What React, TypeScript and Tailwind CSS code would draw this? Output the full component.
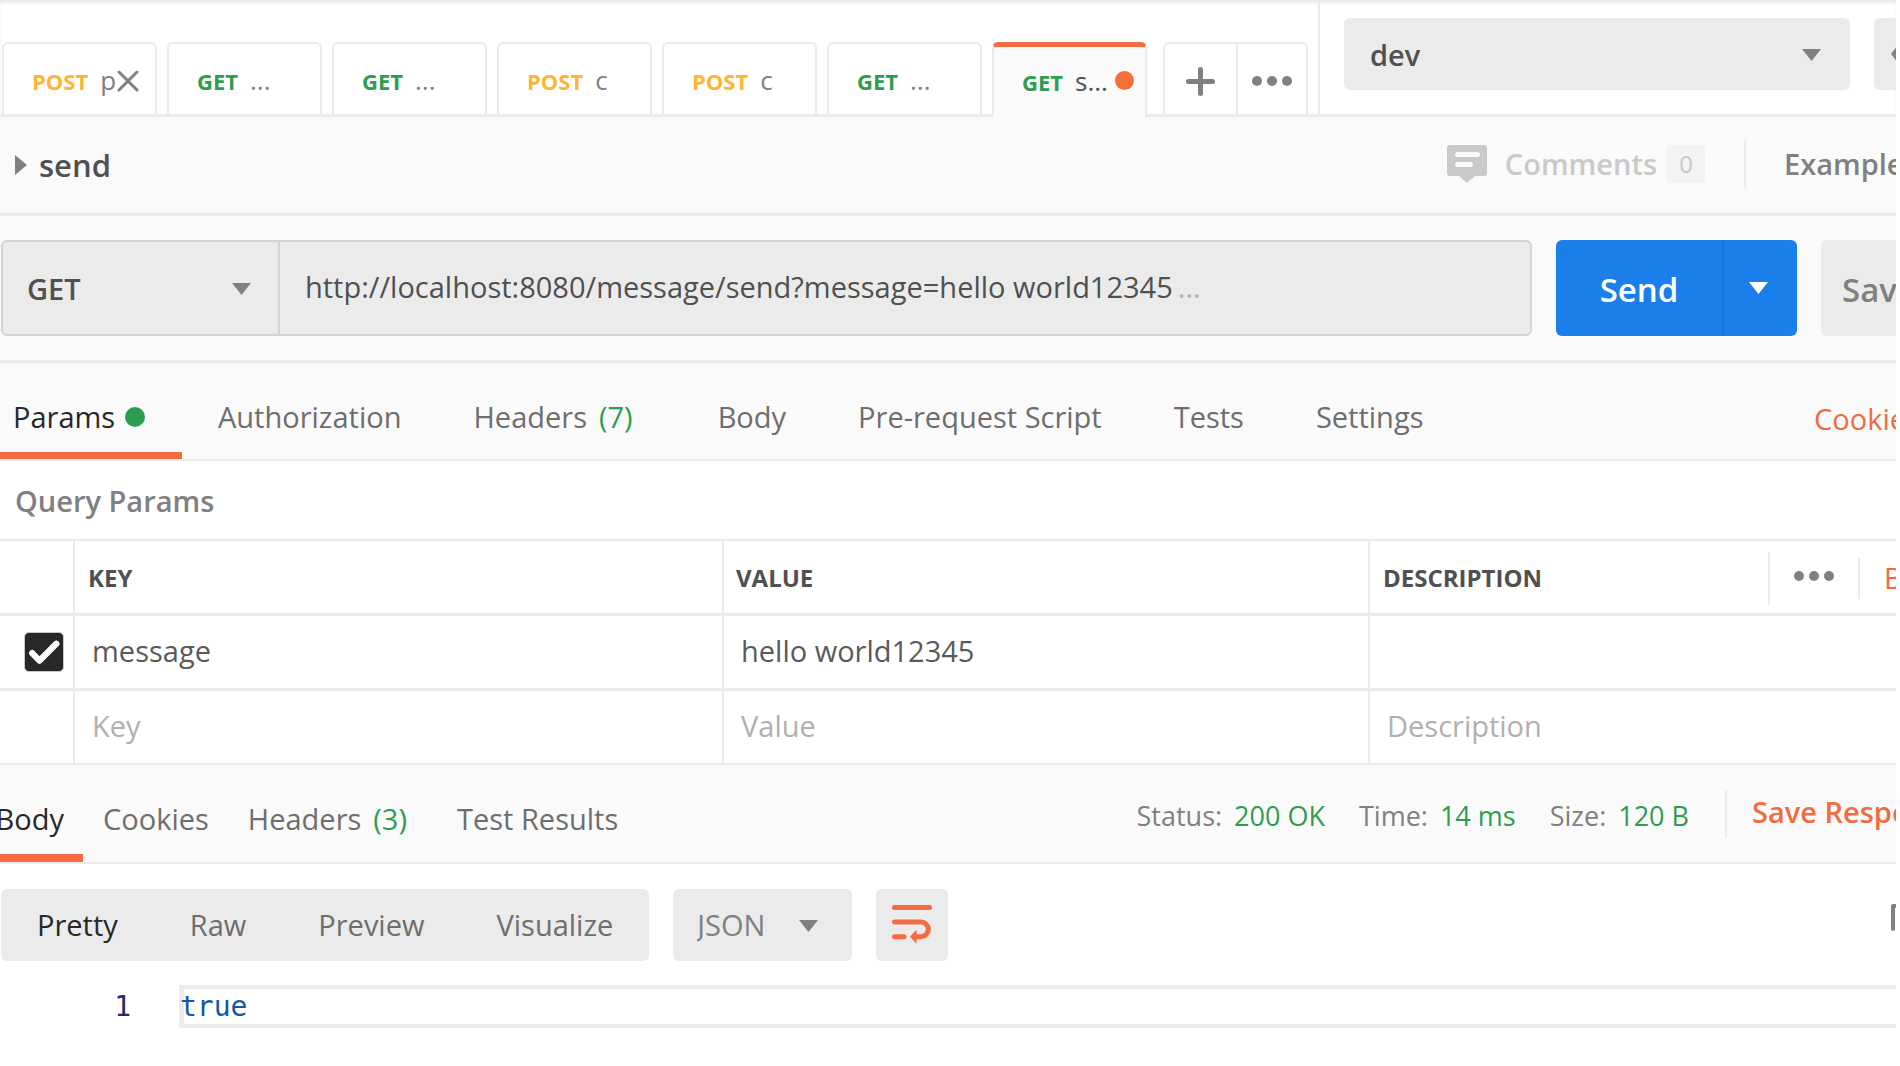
import React, { useState } from 'react';
import clsx from 'clsx';

interface RequestTab {
  id: number;
  method: 'GET' | 'POST';
  name: string;
  closing?: boolean;
}

const requestTabs: RequestTab[] = [
  { id: 1, method: 'POST', name: 'p', closing: true },
  { id: 2, method: 'GET', name: '...' },
  { id: 3, method: 'GET', name: '...' },
  { id: 4, method: 'POST', name: 'c' },
  { id: 5, method: 'POST', name: 'c' },
  { id: 6, method: 'GET', name: '...' },
  { id: 7, method: 'GET', name: 's...' },
];

const Caret = ({ className }: { className?: string }) => (
  <svg viewBox="0 0 19 12" className={clsx('h-3 w-[19px]', className)} fill="currentColor" aria-hidden="true">
    <path d="M0 0h19L9.5 12z" />
  </svg>
);

const Dots = () => (
  <svg viewBox="0 0 40 10" className="h-[10px] w-10" fill="currentColor" aria-hidden="true">
    <circle cx="5" cy="5" r="5" />
    <circle cx="20" cy="5" r="5" />
    <circle cx="35" cy="5" r="5" />
  </svg>
);

const CommentIcon = () => (
  <svg viewBox="0 0 40 38" className="h-[38px] w-10" aria-hidden="true">
    <path d="M3 0h34a3 3 0 0 1 3 3v25a3 3 0 0 1-3 3h-9l-8 7-8-7H3a3 3 0 0 1-3-3V3a3 3 0 0 1 3-3z" fill="#c9c9c9" />
    <path d="M10.500 9.500h20M10.500 19.500h13" stroke="#fafafa" strokeWidth="5" strokeLinecap="round" />
  </svg>
);

const WrapIcon = () => (
  <svg viewBox="0 0 40 39" className="h-[39px] w-10" fill="none" stroke="#f26b41" strokeWidth="5" strokeLinecap="round" aria-hidden="true">
    <path d="M2.500 2.500h35M2.500 17H29a7.300 7.300 0 0 1 0 14.700h-5M2.500 31.700h9.500" />
    <path d="M18 31.700l6.500-7v14z" fill="#f26b41" stroke="none" />
  </svg>
);

const EyeIcon = () => (
  <svg viewBox="0 0 40 26" className="h-[26px] w-10" aria-hidden="true">
    <path d="M0 13C7 3 13 0 20 0s13 3 20 13c-7 10-13 13-20 13S7 23 0 13z" fill="#808080" />
    <circle cx="20" cy="13" r="8" fill="#ebebeb" />
    <circle cx="20" cy="13" r="4" fill="#808080" />
  </svg>
);

const CopyIcon = () => (
  <svg viewBox="0 0 34 42" className="h-[42px] w-[34px]" fill="none" stroke="#808080" strokeWidth="4" strokeLinecap="round" strokeLinejoin="round" aria-hidden="true">
    <path d="M2 25V2h20" />
    <path d="M12 12h20v26H12z" />
  </svg>
);

const TopBar = () => {
  const [active, setActive] = useState(7);

  return (
    <div className="flex h-[117px] border-b-[3px] border-[#ebebeb] bg-white shadow-[inset_0_3px_2px_#ececec]">
      <div className="flex flex-1 items-end pl-0.5">
        <div role="tablist" aria-label="Requests" className="flex items-end gap-[10px]">
          {requestTabs.map((tab) => (
            <button
              key={tab.id}
              role="tab"
              aria-selected={active === tab.id}
              onClick={() => setActive(tab.id)}
              className={clsx(
                'relative flex w-[155px] items-center overflow-hidden rounded-t-md border-x-2 border-[#ebebeb] pl-7',
                active === tab.id
                  ? '-mb-[3px] h-[75px] border-t-[5px] border-t-[#f26b41] bg-[#fafafa] pb-0.5 text-[#505050]'
                  : 'h-[72px] border-t-2 bg-white pt-0.5 text-[#808080]'
              )}
            >
              <span className="flex items-baseline gap-3 text-[26px]">
                <span
                  className={clsx(
                    'text-[22px] font-bold',
                    tab.method === 'GET' ? 'text-[#2d9d4f]' : 'text-[#ffb532]'
                  )}
                >
                  {tab.method}
                </span>
                {tab.name}
              </span>
              {tab.closing && (
                <svg viewBox="0 0 22 22" className="absolute right-4 top-[26px] size-[22px]" stroke="#808080" strokeWidth="3" strokeLinecap="round" aria-hidden="true">
                  <path d="M2 2l18 18M20 2L2 20" />
                </svg>
              )}
              {active === tab.id && (
                <span className="absolute right-[11px] top-6 size-[19px] rounded-full bg-[#f37036]" />
              )}
            </button>
          ))}
        </div>
        <div className="ml-4 flex h-[72px] w-[145px] rounded-t-md border-x-2 border-t-2 border-[#ebebeb] text-[#808080]">
          <button aria-label="New tab" className="flex flex-1 items-center justify-center pt-1">
            <svg viewBox="0 0 29 29" className="size-[29px]" stroke="currentColor" strokeWidth="5" strokeLinecap="round" aria-hidden="true">
              <path d="M14.500 2.500v24M2.500 14.500h24" />
            </svg>
          </button>
          <button aria-label="Tab options" className="flex w-[70px] items-center justify-center border-l-2 border-[#ebebeb] pt-1">
            <Dots />
          </button>
        </div>
      </div>
      <div className="flex shrink-0 items-start border-l-2 border-[#ebebeb] pl-6 pt-[18px]">
        <div className="relative">
          <select
            aria-label="Environment"
            className="h-[72px] w-[506px] appearance-none rounded-md bg-[#ebebeb] pl-[26px] pt-0.5 text-[29px] font-semibold text-[#505050]"
          >
            <option>dev</option>
          </select>
          <Caret className="pointer-events-none absolute right-[29px] top-[31px] text-[#808080]" />
        </div>
        <div className="ml-6 w-[22px] overflow-hidden">
          <button aria-label="Environment quick look" className="flex h-[72px] w-[74px] items-center rounded-md bg-[#ebebeb] pl-[17px]">
            <EyeIcon />
          </button>
        </div>
      </div>
    </div>
  );
};

const RequestHeader = () => (
  <div className="flex h-[99px] items-center border-b-[3px] border-[#ebebeb] pl-[15px]">
    <button className="flex items-center gap-3 text-[31px] font-semibold text-[#505050]">
      <svg viewBox="0 0 12 20" className="h-5 w-3" fill="#808080" aria-hidden="true">
        <path d="M0 0l12 10L0 20z" />
      </svg>
      send
    </button>
    <div className="ml-auto flex items-center pb-0.5 text-[29px] font-semibold">
      <button className="flex items-center text-[#c9c9c9]">
        <CommentIcon />
        <span className="ml-[18px]">Comments</span>
        <span className="ml-[10px] flex h-[38px] w-[38px] items-center justify-center rounded bg-[#f3f3f3] text-2xl font-normal">0</span>
      </button>
      <span className="ml-[39px] h-12 w-0.5 bg-[#ebebeb]" />
      <button className="ml-[38px] w-28 overflow-hidden whitespace-nowrap text-left text-[#808080]">Examples</button>
    </div>
  </div>
);

const UrlBar = () => (
  <div className="flex h-[147px] items-center border-b-[3px] border-[#ebebeb] pl-px">
    <div className="flex h-24 flex-1 rounded-md border-2 border-[#d3d3d3] bg-[#ebebeb]">
      <div className="relative border-r-2 border-[#d3d3d3]">
        <select
          aria-label="Method"
          className="h-full w-[275px] appearance-none pl-6 pt-0.5 text-[29px] font-semibold text-[#505050]"
        >
          <option>GET</option>
        </select>
        <Caret className="pointer-events-none absolute right-[27px] top-[41px] text-[#808080]" />
      </div>
      <div className="flex min-w-0 flex-1 items-center gap-[5px] pb-0.5 pl-[25px] text-[29px]">
        <input
          aria-label="Request URL"
          defaultValue="http://localhost:8080/message/send?message=hello world12345"
          className="field-sizing-content text-[#505050] outline-none"
        />
        <span className="text-[#b0b0b0]">...</span>
      </div>
    </div>
    <div className="ml-6 flex h-24 overflow-hidden rounded-md bg-[#1a7feb] text-white">
      <button className="w-[166px] pt-1 text-[33px] font-semibold">Send</button>
      <button aria-label="Send options" className="flex w-[75px] items-center justify-center border-l-2 border-[#1672dc] pr-1">
        <Caret />
      </button>
    </div>
    <div className="ml-6 w-[75px] overflow-hidden">
      <button className="h-24 w-[125px] rounded-md bg-[#ebebeb] pl-[21px] pt-1 text-left text-[33px] font-semibold text-[#808080]">Save</button>
    </div>
  </div>
);

const requestSections = ['Authorization', 'Headers', 'Body', 'Pre-request Script', 'Tests', 'Settings'];

const RequestSections = () => (
  <div className="flex h-[98px] border-b-2 border-[#ebebeb] text-[29px] text-[#6e6e6e]">
    <div role="tablist" aria-label="Request sections" className="flex">
      <button
        role="tab"
        aria-selected="true"
        className="flex w-[182px] items-center gap-[10px] border-b-[7px] border-[#f26b41] pl-[13px] pt-[18px] text-[#282828]"
      >
        Params
        <span className="size-5 rounded-full bg-[#2d9d4f]" />
      </button>
      {requestSections.map((name) => (
        <button
          key={name}
          role="tab"
          aria-selected="false"
          className={clsx('whitespace-nowrap pl-9 pt-3', name === 'Headers' ? 'pr-[49px]' : 'pr-9')}
        >
          {name}
          {name === 'Headers' && <span className="ml-3 text-[#2d9d4f]">(7)</span>}
        </button>
      ))}
    </div>
    <button className="ml-auto w-[82px] overflow-hidden whitespace-nowrap pt-4 text-left text-[#f26b41]">Cookies</button>
  </div>
);

const thClass = 'h-[75px] border-b-[3px] border-[#ebebeb] pb-0 pt-0.5 text-left text-2xl font-bold text-[#505050]';
const tdClass = 'h-[75px] border-b-[3px] border-[#ebebeb] p-0';
const lastRowClass = 'h-[74px] border-b-2 border-[#ebebeb] p-0';
const cellInput = 'block w-full pb-0.5 pl-[17px] text-[29px] text-[#5a5a5a] outline-none placeholder:text-[#b0b0b0]';

const QueryParams = () => (
  <section className="bg-white">
    <h2 className="flex h-20 items-center border-b-2 border-[#ebebeb] pl-[15px] pt-0.5 text-[29px] font-semibold text-[#808080]">
      Query Params
    </h2>
    <table className="w-full table-fixed border-separate border-spacing-0">
      <colgroup>
        <col className="w-[75px]" />
        <col className="w-[649px]" />
        <col />
        <col className="w-[526px]" />
      </colgroup>
      <thead>
        <tr>
          <th aria-label="Enabled" className={clsx(thClass, 'border-r-2')} />
          <th className={clsx(thClass, 'border-r-2 pl-[13px]')}>KEY</th>
          <th className={clsx(thClass, 'border-r-2 pl-3')}>VALUE</th>
          <th className={clsx(thClass, 'pl-[13px]')}>
            <div className="flex items-center">
              DESCRIPTION
              <span className="ml-auto h-[53px] w-0.5 bg-[#ebebeb]" />
              <button aria-label="Column options" className="ml-6 pb-1 text-[#808080]"><Dots /></button>
              <span className="ml-6 h-[41px] w-0.5 bg-[#ebebeb]" />
              <button className="ml-6 w-3 overflow-hidden whitespace-nowrap text-left text-[29px] font-normal text-[#f26b41]">Bulk Edit</button>
            </div>
          </th>
        </tr>
      </thead>
      <tbody>
        <tr>
          <td className={clsx(tdClass, 'border-r-2')}>
            <label className="relative ml-6 block size-10">
              <input
                type="checkbox"
                aria-label="Enable message"
                defaultChecked
                className="peer block size-full appearance-none rounded-[5px] border border-[#c8c8c8] checked:bg-[#282828]"
              />
              <svg viewBox="0 0 39 39" className="pointer-events-none absolute inset-0 hidden size-full peer-checked:block" fill="none" stroke="#fff" strokeWidth="6" strokeLinecap="round" strokeLinejoin="round" aria-hidden="true">
                <path d="M8 20.500l7 7.500L31.500 11.500" />
              </svg>
            </label>
          </td>
          <td className={clsx(tdClass, 'border-r-2')}>
            <input aria-label="Key" defaultValue="message" className={cellInput} />
          </td>
          <td className={clsx(tdClass, 'border-r-2')}>
            <input aria-label="Value" defaultValue="hello world12345" className={cellInput} />
          </td>
          <td className={tdClass}>
            <input aria-label="Description" className={cellInput} />
          </td>
        </tr>
        <tr>
          <td className={clsx(lastRowClass, 'border-r-2')} />
          <td className={clsx(lastRowClass, 'border-r-2')}>
            <input aria-label="New key" placeholder="Key" className={cellInput} />
          </td>
          <td className={clsx(lastRowClass, 'border-r-2')}>
            <input aria-label="New value" placeholder="Value" className={cellInput} />
          </td>
          <td className={lastRowClass}>
            <input aria-label="New description" placeholder="Description" className={cellInput} />
          </td>
        </tr>
      </tbody>
    </table>
  </section>
);

const responseStats = [
  { label: 'Status:', value: '200 OK' },
  { label: 'Time:', value: '14 ms' },
  { label: 'Size:', value: '120 B' },
];

const ResponseHeader = () => (
  <div className="flex h-[99px] border-b-2 border-[#ebebeb] text-[29px] text-[#6e6e6e]">
    <div role="tablist" aria-label="Response sections" className="flex">
      <button role="tab" aria-selected="true" className="flex w-[83px] items-center justify-end border-b-8 border-[#f26b41] pr-[19px] pt-[18px] text-[#282828]">
        Body
      </button>
      <button role="tab" aria-selected="false" className="px-5 pt-[10px]">Cookies</button>
      <button role="tab" aria-selected="false" className="pl-[19px] pr-[30px] pt-[10px]">
        Headers<span className="ml-3 text-[#2d9d4f]">(3)</span>
      </button>
      <button role="tab" aria-selected="false" className="px-5 pt-[10px]">Test Results</button>
    </div>
    <div className="ml-auto flex items-center">
      <dl className="flex gap-[34px] pt-1.5 text-[27px]">
        {responseStats.map((stat) => (
          <div key={stat.label} className="flex gap-3">
            <dt className="text-[#808080]">{stat.label}</dt>
            <dd className="text-[#2d9d4f]">{stat.value}</dd>
          </div>
        ))}
      </dl>
      <span className="ml-9 h-12 w-0.5 bg-[#ebebeb]" />
      <button className="ml-[25px] w-36 overflow-hidden whitespace-nowrap pb-1 text-left font-semibold text-[#f26b41]">
        Save Response
      </button>
    </div>
  </div>
);

const views = ['Pretty', 'Raw', 'Preview', 'Visualize'];

const ResponseBody = () => {
  const [view, setView] = useState('Pretty');

  return (
    <>
      <div className="flex h-[121px] items-center bg-white pl-px text-[29px]">
        <div className="flex h-[72px] rounded-md bg-[#ebebeb]">
          {views.map((name) => (
            <button
              key={name}
              onClick={() => setView(name)}
              className={clsx('px-9', view === name ? 'text-[#282828]' : 'text-[#6e6e6e]')}
            >
              {name}
            </button>
          ))}
        </div>
        <div className="relative ml-6">
          <select
            aria-label="Format"
            className="h-[72px] w-[179px] appearance-none rounded-md bg-[#ebebeb] pl-6 text-[#808080]"
          >
            <option>JSON</option>
          </select>
          <Caret className="pointer-events-none absolute right-[34px] top-[31px] text-[#808080]" />
        </div>
        <button aria-label="Wrap lines" className="ml-6 flex h-[72px] w-[72px] items-center justify-center rounded-md bg-[#ebebeb]">
          <WrapIcon />
        </button>
        <div className="ml-auto w-[5px] overflow-hidden">
          <button aria-label="Copy" className="block">
            <CopyIcon />
          </button>
        </div>
      </div>
      <div className="flex min-h-[81px] bg-[#fffffe] font-['DejaVu_Sans_Mono',monospace] text-[28px] leading-[43px]">
        <span className="w-[179px] pr-12 text-right text-[#1c2a70]">1</span>
        <code className="flex h-[43px] flex-1 items-center border-y-4 border-[#ececec] pl-px font-['DejaVu_Sans_Mono',monospace] text-[#1458a8] shadow-[inset_5px_0_0_#ececec]">
          true
        </code>
      </div>
    </>
  );
};

const App: React.FC = () => {
  return (
    <main className="min-h-screen overflow-hidden border-r-4 border-white bg-[#fafafa] font-['Open_Sans',sans-serif]">
      <TopBar />
      <RequestHeader />
      <UrlBar />
      <RequestSections />
      <QueryParams />
      <ResponseHeader />
      <ResponseBody />
    </main>
  );
};

export default App;
